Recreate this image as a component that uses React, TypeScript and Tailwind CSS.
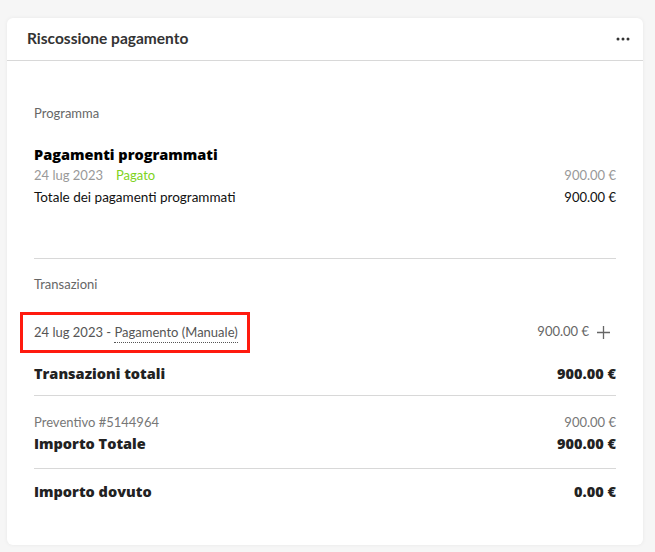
import React from "react";

const body = { fontFamily: "Lato, 'Noto Sans', sans-serif" };
const heavy = { fontFamily: "'Open Sans', Lato, sans-serif" };

function Row({ left, right, className = "" }: { left: React.ReactNode; right: React.ReactNode; className?: string }) {
  return (
    <div className={`flex items-center justify-between ${className}`}>
      <div className="flex items-center">{left}</div>
      <div className="flex items-center">{right}</div>
    </div>
  );
}

export default function App() {
  return (
    <div className="min-h-[552px] w-[655px] bg-[#f6f6f6] pt-[18px] px-[7px]" style={body}>
      <div className="w-[636px] h-[527px] bg-white rounded-md shadow-[0_0_4px_rgba(0,0,0,0.06)]">
        {/* Header */}
        <div className="h-[43px] flex items-center justify-between pl-[20px] pr-[13px] border-b border-[#d8d8d8]">
          <span className="text-[15.5px] font-bold text-[#333]">Riscossione pagamento</span>
          <svg width="14" height="4" viewBox="0 0 14 4" className="text-[#333]">
            <circle cx="2" cy="2" r="1.5" fill="currentColor" />
            <circle cx="7" cy="2" r="1.5" fill="currentColor" />
            <circle cx="12" cy="2" r="1.5" fill="currentColor" />
          </svg>
        </div>

        <div className="px-[27px] text-[13px]">
          {/* Programma */}
          <div className="pt-[43px] text-[#666]">Programma</div>
          <div className="mt-[21px] text-[14.5px] font-extrabold text-black leading-[20px]" style={heavy}>
            Pagamenti programmati
          </div>
          <Row
            className="leading-[20px] text-[#999]"
            left={
              <>
                <span>24 lug 2023</span>
                <span className="ml-[13px] text-[#7ed321]">Pagato</span>
              </>
            }
            right={<span>900.00 €</span>}
          />
          <Row
            className="mt-[2px] leading-[20px] text-[13.5px] text-[#111]"
            left={<span>Totale dei pagamenti programmati</span>}
            right={<span className="text-[13px]">900.00 €</span>}
          />
          <div className="mt-[51px] border-t border-[#d8d8d8]" />

          {/* Transazioni */}
          <div className="pt-[16px] leading-[18px] text-[#666]">Transazioni</div>
          <div className="mt-[19px] flex items-center justify-between">
            <div className="-ml-[14px] h-[41px] w-[230px] border-[3px] border-[#ff1a0f] flex items-center pl-[11px] text-[#555]">
              <span className="leading-[18px]">
                24 lug 2023 -{" "}
                <span className="border-b border-dotted border-[#555] pb-[2px]">Pagamento (Manuale)</span>
              </span>
            </div>
            <div className="flex items-center text-[#666]">
              <span>900.00 €</span>
              <svg width="13" height="13" viewBox="0 0 13 13" className="ml-[8px] mr-[6px]">
                <path d="M6.5 0v13M0 6.5h13" stroke="#666" strokeWidth="1.3" />
              </svg>
            </div>
          </div>
          <Row
            className="mt-[10px] leading-[22px] text-[14.5px] font-extrabold text-[#222]"
            left={<span style={heavy}>Transazioni totali</span>}
            right={<span style={heavy}>900.00 €</span>}
          />
          <div className="mt-[10px] border-t border-[#d8d8d8]" />

          {/* Totals */}
          <Row
            className="mt-[16px] leading-[20px] text-[#777]"
            left={<span>Preventivo #5144964</span>}
            right={<span>900.00 €</span>}
          />
          <Row
            className="mt-[1px] leading-[22px] text-[14.5px] font-extrabold text-[#222]"
            left={<span style={heavy}>Importo Totale</span>}
            right={<span style={heavy}>900.00 €</span>}
          />
          <div className="mt-[13px] border-t border-[#d8d8d8]" />
          <Row
            className="mt-[12px] leading-[22px] text-[14.5px] font-extrabold text-[#222]"
            left={<span style={heavy}>Importo dovuto</span>}
            right={<span style={heavy}>0.00 €</span>}
          />
        </div>
      </div>
    </div>
  );
}
